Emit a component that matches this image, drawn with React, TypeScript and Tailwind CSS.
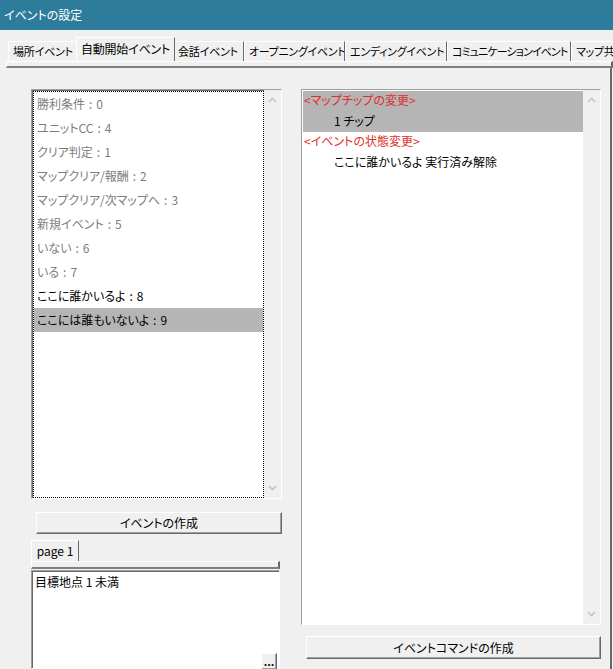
const font = "font-['Noto_Sans_CJK_JP','Noto_Sans',sans-serif] [font-feature-settings:'palt']";

const tabs = [
  { label: "場所イベント", w: "w-[70px]", t: "tracking-[-0.2px]" },
  { label: "自動開始イベント", w: "w-[99px]", active: true, t: "tracking-[-0.2px]" },
  { label: "会話イベント", w: "w-[71px]", t: "tracking-[-0.2px]" },
  { label: "オープニングイベント", w: "w-[101px]", t: "tracking-[-0.3px]" },
  { label: "エンディングイベント", w: "w-[102px]", t: "tracking-[-0.3px]" },
  { label: "コミュニケーションイベント", w: "w-[124px]", t: "tracking-[-0.9px]" },
  { label: "マップ共通イベント", w: "w-[100px]", t: "tracking-[-0.3px]" },
];

const events = [
  { name: "勝利条件", n: 0 },
  { name: "ユニットCC", n: 4 },
  { name: "クリア判定", n: 1 },
  { name: "マップクリア/報酬", n: 2 },
  { name: "マップクリア/次マップへ", n: 3 },
  { name: "新規イベント", n: 5 },
  { name: "いない", n: 6 },
  { name: "いる", n: 7 },
  { name: "ここに誰かいるよ", n: 8, dark: true },
  { name: "ここには誰もいないよ", n: 9, dark: true, selected: true },
];

function Chevron({ up }: { up?: boolean }) {
  return (
    <svg width="9" height="6" viewBox="0 0 9 6" className="block">
      <path
        d={up ? "M1 5 L4.5 1.5 L8 5" : "M1 1 L4.5 4.5 L8 1"}
        fill="none"
        stroke="#c4c4c4"
        strokeWidth="1.6"
      />
    </svg>
  );
}

function ScrollBar() {
  return (
    <div className="w-[17px] bg-[#f0f0f0] flex flex-col justify-between items-center py-[7px]">
      <Chevron up />
      <Chevron />
    </div>
  );
}

const raised =
  "border border-t-white border-l-white border-r-[#696969] border-b-[#696969] shadow-[inset_-1px_-1px_0_#a0a0a0] bg-[#f0f0f0]";
const sunken =
  "border border-t-[#a0a0a0] border-l-[#a0a0a0] border-r-white border-b-white shadow-[inset_1px_1px_0_#696969]";

export default function App() {
  return (
    <div className={`w-[613px] h-[669px] overflow-hidden bg-[#f0f0f0] text-[12px] leading-none text-black ${font}`}>
      {/* Title bar */}
      <div className="h-[30px] bg-[#2e7c9b] text-white flex items-center pl-[4px]">イベントの設定</div>

      {/* Tabs */}
      <div className="h-[31px] flex items-end pl-[8px] whitespace-nowrap">
        {tabs.map((t) =>
          t.active ? (
            <div
              key={t.label}
              className={`${t.w} ${t.t} shrink-0 h-[24px] -mx-[2px] relative z-10 bg-[#f0f0f0] border-t border-l border-white border-r border-r-[#696969] flex items-center justify-center overflow-hidden text-[12px] pb-[2px]`}
            >
              {t.label}
            </div>
          ) : (
            <div
              key={t.label}
              className={`${t.w} ${t.t} shrink-0 h-[20px] border-t border-l border-white border-r border-r-[#696969] flex items-center justify-start pl-[4px] overflow-hidden text-[11px]`}
            >
              {t.label}
            </div>
          )
        )}
      </div>
      <div className="ml-[6px] h-[7px] border-t border-l border-white border-b-2 border-b-[#808080] border-r-2 border-r-[#696969]" />

      <div className="flex h-[601px] border-r-2 border-r-[#696969] mr-[1px]">
        {/* Left column */}
        <div className="w-[251px] ml-[31px] pt-[21px] flex flex-col">
          <div className={`h-[410px] flex ${sunken}`}>
            <div className="flex-1 bg-white border border-dotted border-black ml-[1px] mt-[1px]">
              {events.map((e) => (
                <div
                  key={e.name}
                  className={`h-[24px] flex items-center pl-[3px] pb-[1px] ${e.selected ? "bg-[#b5b5b5]" : ""} ${e.dark ? "text-black" : "text-[#7d7d7d]"}`}
                >
                  {e.name}
                  <span className="px-[4px]">:</span>
                  {e.n}
                </div>
              ))}
            </div>
            <ScrollBar />
          </div>

          <button className={`mt-[13px] ml-[5px] h-[22px] flex items-center justify-center ${raised}`}>
            イベントの作成
          </button>

          <div className="mt-[6px] flex items-end h-[21px]">
            <div className="w-[48px] h-[21px] border-t border-l border-white border-r border-r-[#696969] flex items-center justify-center">
              page 1
            </div>
          </div>
          <div className="h-[8px] w-[249px] border-t border-l border-white border-b-2 border-b-[#808080] border-r-2 border-r-[#696969]" />

          <div className={`mt-[1px] w-[249px] flex-1 bg-white ${sunken} relative`}>
            <div className="pl-[3px] pt-[5px]">目標地点 1 未満</div>
            <div className={`absolute right-[2px] bottom-[-2px] w-[16px] h-[17px] flex items-center justify-center font-bold text-[11px] ${raised}`}>
              ...
            </div>
          </div>
        </div>

        {/* Right column */}
        <div className="w-[300px] ml-[19px] pt-[21px] flex flex-col">
          <div className={`h-[536px] flex ${sunken}`}>
            <div className="flex-1 bg-white pl-[1px] pt-[1px]">
              <div className="bg-[#b5b5b5]">
                <div className="h-[20px] flex items-center pl-[1px] pb-[3px] text-[#e0302c]">&lt;マップチップの変更&gt;</div>
                <div className="h-[21px] flex items-center pl-[31px] pb-[1px]">1 チップ</div>
              </div>
              <div className="h-[20px] flex items-center pl-[1px] pb-[3px] text-[#e0302c]">&lt;イベントの状態変更&gt;</div>
              <div className="h-[20px] flex items-center pl-[31px]">ここに誰かいるよ 実行済み解除</div>
            </div>
            <ScrollBar />
          </div>
          <button className={`mt-[11px] ml-[5px] h-[23px] flex items-center justify-center ${raised}`}>
            イベントコマンドの作成
          </button>
        </div>
      </div>
    </div>
  );
}
